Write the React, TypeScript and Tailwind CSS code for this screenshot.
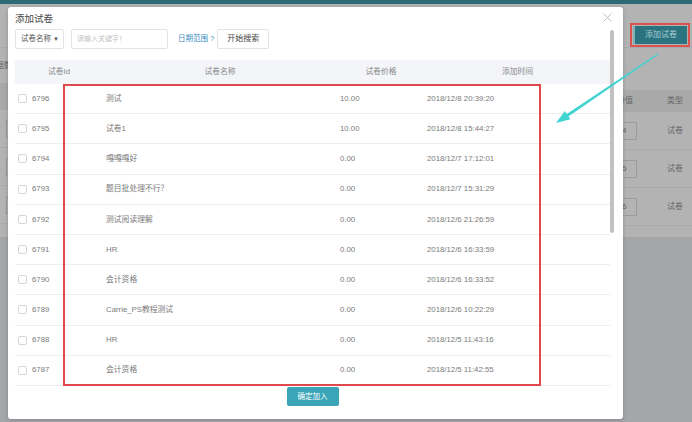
const rows = [
  { id: "6796", name: "测试", price: "10.00", time: "2018/12/8 20:39:20" },
  { id: "6795", name: "试卷1", price: "10.00", time: "2018/12/8 15:44:27" },
  { id: "6794", name: "嘎嘎嘎好", price: "0.00", time: "2018/12/7 17:12:01" },
  { id: "6793", name: "题目批处理不行？", price: "0.00", time: "2018/12/7 15:31:29" },
  { id: "6792", name: "测试阅读理解", price: "0.00", time: "2018/12/6 21:26:59" },
  { id: "6791", name: "HR", price: "0.00", time: "2018/12/6 16:33:59" },
  { id: "6790", name: "会计资格", price: "0.00", time: "2018/12/6 16:33:52" },
  { id: "6789", name: "Carrie_PS教程测试", price: "0.00", time: "2018/12/6 10:22:29" },
  { id: "6788", name: "HR", price: "0.00", time: "2018/12/5 11:43:16" },
  { id: "6787", name: "会计资格", price: "0.00", time: "2018/12/5 11:42:55" },
];

const bgRows = ["4", "5", "6"];

export default function App() {
  return (
    <div className="relative w-[692px] h-[422px] overflow-hidden bg-[#a5a6aa] font-['Liberation_Sans','Noto_Sans_CJK_SC',sans-serif]">
      {/* page behind the overlay */}
      <div className="h-[4px] bg-[#2d6a77]" />
      <div className="h-[233px] bg-[#b3b3b3] flex">
        {/* left strip */}
        <div className="w-[622px] flex flex-col">
          <div className="h-[44px] border-b border-[#a9a9a9]" />
          <div className="h-[35px] flex items-center text-[8px] text-[#666] -ml-[4px]">据数</div>
          <div className="h-[27px] bg-[#a9a9aa]" />
          {bgRows.map((r) => (
            <div key={r} className="h-[38px] border-b border-[#a9a9a9] flex items-center pl-[6px]">
              <div className="w-[20px] h-[18px] border border-[#9c9c9c]" />
            </div>
          ))}
        </div>
        {/* right strip */}
        <div className="flex-1 flex flex-col">
          <div className="h-[44px] border-b border-[#a9a9a9] flex items-start pt-[19px] pl-[8px]">
            <div className="w-[60px] h-[24px] border-2 border-[#d9534f] p-[1px]">
              <div className="h-full bg-[#2c7380] border-l-2 border-[#7fb0b8] flex items-center justify-center text-[8px] text-[#a9cdd2]">
                添加试卷
              </div>
            </div>
          </div>
          <div className="h-[42px]" />
          <div className="h-[22px] bg-[#a9a9aa] flex items-center text-[8px] text-[#666]">
            <span className="-ml-[5px] w-[50px]">分值</span>
            <span>类型</span>
          </div>
          {bgRows.map((r) => (
            <div key={r} className="h-[38px] border-b border-[#a9a9a9] flex items-center text-[8px] text-[#666]">
              <div className="-ml-[4px] w-[19px] h-[18px] border border-[#9c9c9c] flex items-center pl-[3px]">{r}</div>
              <span className="ml-[30px]">试卷</span>
            </div>
          ))}
        </div>
      </div>

      {/* modal */}
      <div className="absolute left-[8px] top-[7px] w-[615px] h-[412px] bg-white rounded-[3px] shadow-[0_1px_4px_rgba(0,0,0,0.2)] px-[7px] pt-[6px]">
        <svg className="absolute left-[595px] top-[6px]" width="9" height="9" viewBox="0 0 9 9">
          <path d="M0.5 0.5 L8.5 8.5 M8.5 0.5 L0.5 8.5" stroke="#b5b5b5" strokeWidth="0.9" fill="none" />
        </svg>
        <div className="absolute left-[602px] top-[23px] w-[4px] h-[203px] rounded-full bg-[#c1c1c1]" />

        <div className="h-[12px] leading-[12px] text-[9.5px] text-[#444]">添加试卷</div>

        <div className="mt-[4px] flex items-center h-[20px] text-[7.5px]">
          <div className="w-[49px] h-[20px] border border-[#e3e3e3] rounded-[2px] flex items-center pl-[5px] pr-[4px] justify-between text-[#555]">
            <span>试卷名称</span>
            <span className="text-[6px]">▼</span>
          </div>
          <div className="ml-[7px] w-[97px] h-[20px] border border-[#e3e3e3] rounded-[2px] flex items-center pl-[5px] text-[7px] text-[#c4c4c4]">
            请输入关键字！
          </div>
          <span className="ml-[10px] text-[#3b8cc0]">日期范围 ?</span>
          <div className="ml-[3px] w-[52px] h-[20px] border border-[#e3e3e3] rounded-[2px] flex items-center justify-center text-[8px] text-[#444]">
            开始搜索
          </div>
        </div>

        <div className="mt-[11px] w-[595px] text-[7.8px] text-[#7a7a7a]">
          <div className="grid grid-cols-[88px_234px_88px_1fr] h-[24px] items-center bg-[#f3f5f8] text-center text-[#888]">
            <span>试卷Id</span>
            <span>试卷名称</span>
            <span>试卷价格</span>
            <span>添加时间</span>
          </div>
          {rows.map((r) => (
            <div key={r.id} className="grid grid-cols-[88px_234px_88px_1fr] h-[30.2px] items-center border-b border-[#eeeeee]">
              <div className="flex items-center pl-[3px]">
                <div className="w-[9px] h-[9px] border border-[#d6d6d6] rounded-[2px]" />
                <span className="ml-[5px]">{r.id}</span>
              </div>
              <span className="pl-[3px]">{r.name}</span>
              <span className="pl-[3px]">{r.price}</span>
              <span className="pl-[2px]">{r.time}</span>
            </div>
          ))}
        </div>

        <div className="mt-[1px] flex justify-center w-[595px]">
          <div className="w-[52px] h-[19px] rounded-[2px] bg-[#3aa5b7] text-white text-[7.5px] flex items-center justify-center">
            确定加入
          </div>
        </div>
      </div>

      {/* annotations */}
      <div className="absolute left-[63px] top-[84px] w-[478px] h-[302px] border-2 border-[#e0484c] pointer-events-none" />
      <svg className="absolute left-0 top-0 pointer-events-none" width="692" height="422" viewBox="0 0 692 422">
        <polygon
          points="657.7,53.6 658.3,54.4 568.4,116.4 570.4,119.3 556,123 564.8,111 566.8,113.9"
          fill="#3fd3d2"
        />
      </svg>
    </div>
  );
}
